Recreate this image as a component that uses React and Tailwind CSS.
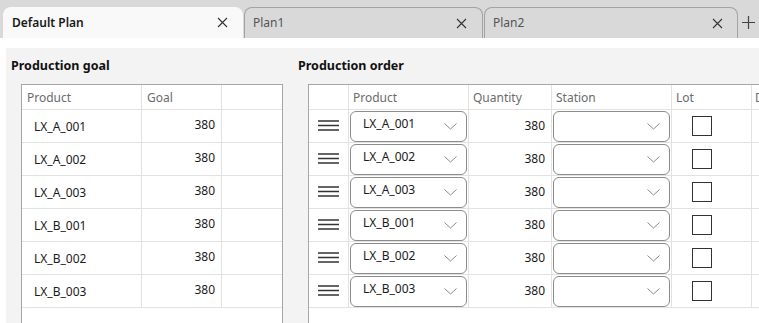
import React from "react";

const font = { fontFamily: '"Noto Sans", "Open Sans", Arial, sans-serif' };

function Close() {
  return (
    <svg width="11" height="11" viewBox="0 0 11 11" className="block">
      <path d="M1 1 L10 10 M10 1 L1 10" stroke="#333" strokeWidth="1.1" fill="none" />
    </svg>
  );
}

function Chevron() {
  return (
    <svg width="13" height="7" viewBox="0 0 13 7" className="block">
      <path d="M0.5 0.5 L6.5 6 L12.5 0.5" stroke="#8a8a8a" strokeWidth="1" fill="none" />
    </svg>
  );
}

function Burger() {
  return (
    <svg width="22" height="12" viewBox="0 0 22 12" className="block">
      <path d="M0 1 H21 M0 5.5 H21 M0 10 H21" stroke="#333" strokeWidth="1.3" fill="none" />
    </svg>
  );
}

const products = ["LX_A_001", "LX_A_002", "LX_A_003", "LX_B_001", "LX_B_002", "LX_B_003"];

function Dropdown({ text }) {
  return (
    <div className="h-[31px] mx-px border border-[#8c8c8c] rounded-[6px] bg-white flex items-center justify-between pl-[12px] pr-[9px]">
      <span className="text-[12px] text-[#1a1a1a] -mt-[4px]">{text}</span>
      <Chevron />
    </div>
  );
}

export default function App() {
  return (
    <div className="w-[759px] h-[323px] overflow-hidden bg-white" style={font}>
      {/* Tab bar */}
      <div className="h-[38px] bg-[#d9d9d9] flex items-end">
        <div className="ml-[3px] w-[240px] h-[31px] rounded-t-[8px] bg-[#f9f9f9] flex items-center justify-between pl-[9px] pr-[15px]">
          <span className="text-[12px] font-semibold text-[#1a1a1a]">Default Plan</span>
          <Close />
        </div>
        <div className="ml-px w-[239px] h-[31px] rounded-t-[8px] border border-b-0 border-[#a3a3a3] flex items-center justify-between pl-[8px] pr-[15px]">
          <span className="text-[12px] text-[#555]">Plan1</span>
          <Close />
        </div>
        <div className="ml-[1px] w-[254px] h-[31px] rounded-t-[8px] border border-b-0 border-[#a3a3a3] flex items-center justify-between pl-[8px] pr-[14px]">
          <span className="text-[12px] text-[#555]">Plan2</span>
          <Close />
        </div>
        <div className="flex-1 h-[31px] flex items-center justify-center">
          <svg width="13" height="13" viewBox="0 0 13 13" className="block">
            <path d="M6.5 0 V13 M0 6.5 H13" stroke="#444" strokeWidth="1.2" fill="none" />
          </svg>
        </div>
      </div>

      <div className="h-[10px]" />

      {/* Panel */}
      <div className="ml-[6px] h-[275px] bg-[#f3f3f3] flex overflow-hidden">
        {/* Left */}
        <div className="w-[286px] shrink-0 flex flex-col">
          <div className="h-[36px] pl-[5px] pt-[9px] text-[12.5px] font-bold text-[#111]">Production goal</div>
          <div className="ml-[15px] w-[262px] flex-1 bg-white border border-b-0 border-[#a6a6a6]">
            <div className="grid grid-cols-[120px_80px_1fr] h-[25px] border-b border-[#e2e2e2]">
              <div className="border-r border-[#e2e2e2] pl-[5px] pt-[2px] flex items-center text-[12px] text-[#6b6b6b]">Product</div>
              <div className="border-r border-[#e2e2e2] pl-[5px] pt-[2px] flex items-center text-[12px] text-[#6b6b6b]">Goal</div>
              <div />
            </div>
            {products.map((p) => (
              <div key={p} className="grid grid-cols-[120px_80px_1fr] h-[33px] border-b border-[#e2e2e2]">
                <div className="border-r border-[#e2e2e2] pl-[12px] pt-[2px] flex items-center text-[12px] text-[#1a1a1a]">{p}</div>
                <div className="border-r border-[#e2e2e2] pr-[6px] flex items-center justify-end text-[12px] text-[#1a1a1a] -mt-[2px]">380</div>
                <div />
              </div>
            ))}
          </div>
        </div>

        {/* Right */}
        <div className="flex-1 flex flex-col min-w-0">
          <div className="h-[36px] pl-[6px] pt-[9px] text-[12.5px] font-bold text-[#111] whitespace-nowrap">Production order</div>
          <div className="ml-[16px] w-[520px] flex-1 bg-white border border-b-0 border-r-0 border-[#a6a6a6]">
            <div className="grid grid-cols-[40px_120px_83px_120px_80px_1fr] h-[25px] border-b border-[#e2e2e2]">
              <div className="border-r border-[#e2e2e2]" />
              <div className="border-r border-[#e2e2e2] pl-[4px] pt-[2px] flex items-center text-[12px] text-[#6b6b6b]">Product</div>
              <div className="border-r border-[#e2e2e2] pl-[4px] pt-[2px] flex items-center text-[12px] text-[#6b6b6b]">Quantity</div>
              <div className="border-r border-[#e2e2e2] pl-[4px] pt-[2px] flex items-center text-[12px] text-[#6b6b6b]">Station</div>
              <div className="border-r border-[#e2e2e2] pl-[4px] pt-[2px] flex items-center text-[12px] text-[#6b6b6b]">Lot</div>
              <div className="pl-[3px] pt-[2px] flex items-center text-[12px] text-[#6b6b6b]">D</div>
            </div>
            {products.map((p) => (
              <div key={p} className="grid grid-cols-[40px_120px_83px_120px_80px_1fr] h-[33px] border-b border-[#e2e2e2]">
                <div className="border-r border-[#e2e2e2] flex items-center pl-[9px]">
                  <Burger />
                </div>
                <div className="border-r border-[#e2e2e2] flex flex-col justify-center">
                  <Dropdown text={p} />
                </div>
                <div className="border-r border-[#e2e2e2] pr-[6px] flex items-center justify-end text-[12px] text-[#1a1a1a]">380</div>
                <div className="border-r border-[#e2e2e2] flex flex-col justify-center">
                  <Dropdown text="" />
                </div>
                <div className="border-r border-[#e2e2e2] flex items-center pl-[20px]">
                  <div className="w-[20px] h-[20px] border-[1.5px] border-[#333] bg-white" />
                </div>
                <div />
              </div>
            ))}
          </div>
        </div>
      </div>
    </div>
  );
}
